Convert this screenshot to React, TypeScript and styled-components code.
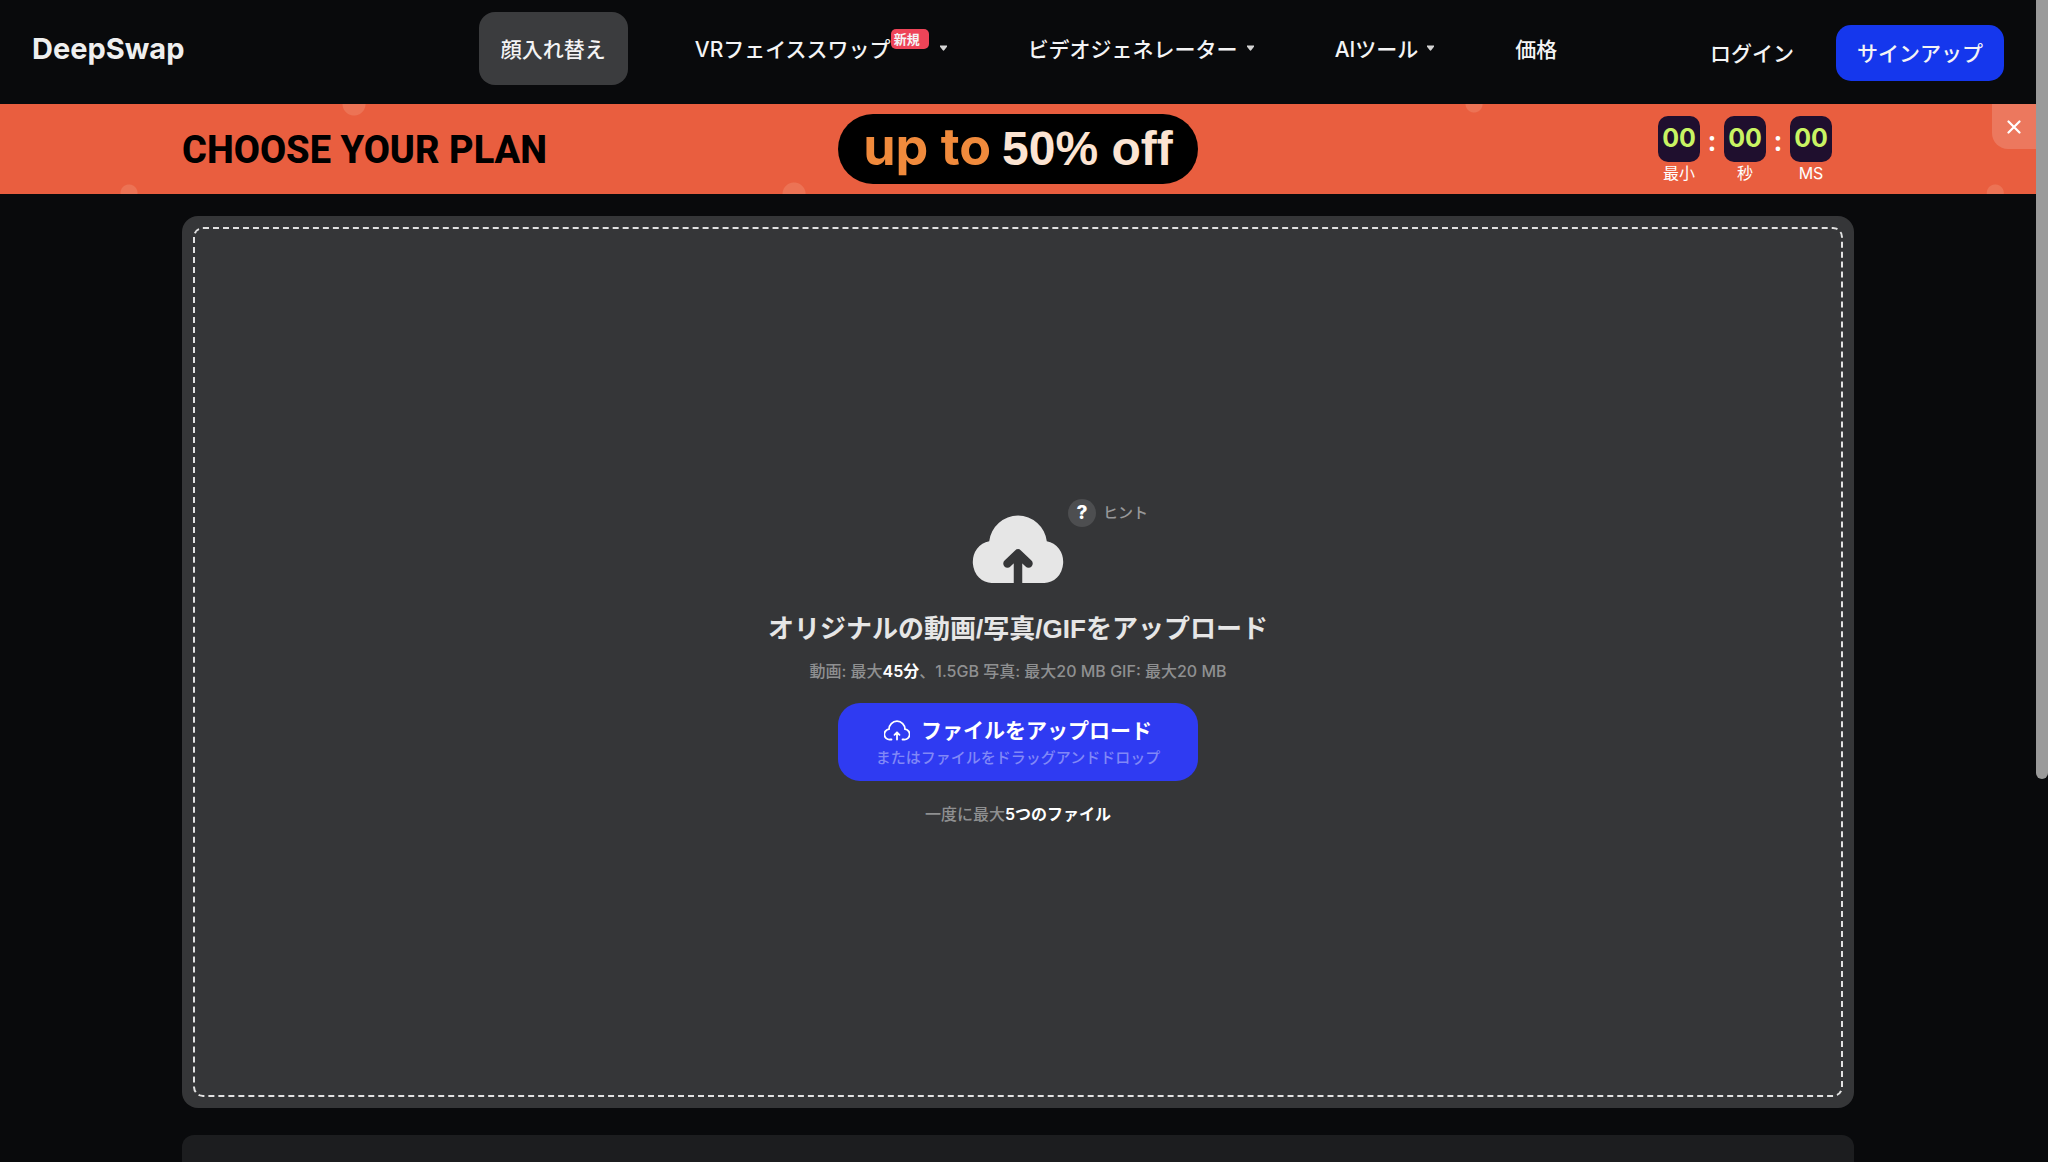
import React from "react";
import styled, { createGlobalStyle } from "styled-components";

const SANS = `Inter, "Noto Sans CJK JP", sans-serif`;

const GlobalStyle = createGlobalStyle`
  *, *::before, *::after { box-sizing: border-box; }
  body {
    margin: 0;
    background: #090a0c;
    color: #f4f4f5;
    font-family: ${SANS};
  }
  button { font: inherit; color: inherit; border: 0; padding: 0; background: none; cursor: pointer; }
  a { color: inherit; text-decoration: none; }
`;

const Page = styled.div`
  height: 100vh;
  overflow: hidden;
  padding-right: 12px;
`;

const Header = styled.header`
  display: grid;
  grid-template-columns: 1fr auto 1fr;
  align-items: start;
  height: 104px;
  padding: 12px 32px 0;
`;

const Logo = styled.a`
  justify-self: start;
  font-size: 29px;
  font-weight: 700;
  line-height: 74px;
  color: #efefef;
`;

const Nav = styled.nav`
  display: flex;
  gap: 45px;
  margin-left: 22px;
  font-size: 21px;
  font-weight: 500;
  white-space: nowrap;
`;

const NavLink = styled.a<{ $active?: boolean }>`
  display: flex;
  align-items: center;
  height: 73px;
  padding: 0 22px 2px;
  border-radius: 16px;
  background: ${(p) => (p.$active ? "#3b3c3e" : "transparent")};
`;

const NavButton = styled.button`
  display: flex;
  align-items: center;
  height: 73px;
  padding: 0 14px 2px 22px;
`;

const Badge = styled.span`
  align-self: flex-start;
  margin: 17px 2px 0 0;
  width: 38px;
  height: 20px;
  padding-left: 3px;
  border-radius: 5px;
  background: #ee4458;
  font-size: 13px;
  line-height: 20px;
  font-weight: 600;
  text-align: left;
`;

const Caret = styled.svg`
  width: 7px;
  height: 6px;
  margin-left: 9px;
`;

const Account = styled.div`
  justify-self: end;
  display: flex;
  align-items: center;
  gap: 42px;
  padding-top: 13px;
  font-size: 21px;
  font-weight: 500;
  white-space: nowrap;
`;

const LogIn = styled.a`
  padding-bottom: 2px;
`;

const SignUp = styled.button`
  height: 56px;
  padding: 0 21px 2px;
  border-radius: 15px;
  background: #1537ed;
`;

const Banner = styled.section`
  position: relative;
  display: grid;
  grid-template-columns: 1fr auto 1fr;
  align-items: center;
  height: 90px;
  padding: 0 204px 0 182px;
  background:
    radial-gradient(circle at 354px 0, #ec7355 11px, transparent 12px),
    radial-gradient(circle at 72.4% 0, #ec7355 8px, transparent 9px),
    radial-gradient(circle at 129px 89px, #ec7355 8px, transparent 9px),
    radial-gradient(circle at 39% 90px, #ec7355 11px, transparent 12px),
    radial-gradient(circle at 98% 89px, #ec7355 8px, transparent 9px),
    #e95e3f;
`;

const Plan = styled.h2`
  margin: 0;
  padding-top: 2px;
  font-family: Roboto, sans-serif;
  font-size: 38px;
  font-weight: 800;
  line-height: 88px;
  white-space: nowrap;
  color: #000;
`;

const Offer = styled.p`
  display: flex;
  align-items: baseline;
  justify-content: center;
  gap: 11px;
  width: 360px;
  height: 70px;
  margin: 0 0 0 22px;
  border-radius: 35px;
  background: #000;
  color: #fce4d2;
  font: 700 48px/66px "Liberation Sans", Arial, sans-serif;
  white-space: nowrap;
`;

const OfferLead = styled.span`
  font-family: Inter, sans-serif;
  font-size: 52px;
  color: #f08a3c;
`;

const Timer = styled.div`
  justify-self: end;
  display: flex;
  gap: 8px;
  padding-top: 2px;
`;

const TimerUnit = styled.div`
  display: flex;
  flex-direction: column;
  align-items: center;
  width: 42px;
  font-size: 16px;
  line-height: 22px;
  color: #fff;
`;

const TimerValue = styled.span`
  width: 42px;
  height: 46px;
  border-radius: 10px;
  background: #1f0f2e;
  color: #c9f463;
  font: 700 25px/44px Inter, sans-serif;
  text-align: center;
`;

const Colon = styled.span`
  width: 8px;
  color: #fff;
  font: 700 26px/50px "Open Sans", sans-serif;
  text-align: center;
`;

const Close = styled.button`
  position: absolute;
  top: 0;
  right: 0;
  display: grid;
  place-items: center;
  width: 44px;
  height: 45px;
  border-radius: 0 0 0 16px;
  background: #ec785e;
`;

const Content = styled.main`
  display: flex;
  flex-direction: column;
  gap: 27px;
  padding: 22px 182px 0;
`;

const UploadCard = styled.section`
  display: flex;
  height: calc(100vh - 270px);
  padding: 11px;
  border-radius: 16px;
  background: #353638;
`;

const DropZone = styled.div`
  flex: 1;
  display: flex;
  flex-direction: column;
  align-items: center;
  justify-content: center;
  border: 2px dashed #e2e2e2;
  border-radius: 10px;
`;

const CloudArea = styled.div`
  position: relative;
  padding-top: 16px;
  height: 84px;
`;

const Hint = styled.button`
  position: absolute;
  left: 100%;
  top: 0;
  display: flex;
  align-items: center;
  gap: 7px;
  margin-left: 4px;
  color: #98989a;
  font-size: 15px;
  font-weight: 500;
  line-height: 28px;
  white-space: nowrap;
`;

const HintMark = styled.span`
  width: 28px;
  height: 28px;
  border-radius: 50%;
  background: #4d4e50;
  color: #fff;
  font-size: 19px;
  font-weight: 800;
`;

const Title = styled.h1`
  margin: 28px 0 0;
  font-family: "Liberation Sans", "Noto Sans CJK JP", sans-serif;
  font-size: 26px;
  font-weight: 700;
  line-height: 36px;
  color: #e6e6e6;
`;

const Note = styled.p<{ $top: number }>`
  margin: ${(p) => p.$top}px 0 0;
  font-size: 16px;
  font-weight: 500;
  line-height: 24px;
  color: #8f9091;

  strong {
    color: #fff;
    font-weight: 600;
  }
`;

const UploadButton = styled.button`
  display: flex;
  flex-direction: column;
  align-items: center;
  justify-content: center;
  width: 360px;
  height: 78px;
  margin-top: 20px;
  padding-top: 2px;
  border-radius: 22px;
  background: #2f3bf2;
`;

const UploadLabel = styled.span`
  display: flex;
  align-items: center;
  gap: 11px;
  font-size: 21px;
  font-weight: 600;
  line-height: 30px;
  color: #fff;
`;

const UploadHint = styled.span`
  font-size: 15px;
  font-weight: 500;
  line-height: 24px;
  color: #8188f7;
`;

const NextCard = styled.section`
  height: 400px;
  border-radius: 12px;
  background: #1c1d1f;
`;

const ScrollRail = styled.div`
  position: fixed;
  top: 0;
  right: 0;
  bottom: 0;
  width: 12px;
`;

const ScrollThumb = styled.div`
  height: 67%;
  border-radius: 0 0 6px 6px;
  background: #9a9a9a;
`;

const DownCaret = () => (
  <Caret viewBox="0 0 8 6" aria-hidden="true">
    <path d="M1 0h6a1 1 0 0 1 1 1.6L5 5.4a1.3 1.3 0 0 1-2 0L0 1.6A1 1 0 0 1 1 0z" fill="#d4d4d4" />
  </Caret>
);

const CloudIcon = () => (
  <svg width="92" height="68" viewBox="0 0 92 68" aria-hidden="true">
    <path
      d="M20 68A19 21 0 0 1 17.200 26.200A29 29 0 0 1 74.800 26.200A19 21 0 0 1 72 68z"
      fill="#e6e6e6"
    />
    <path
      d="M46 74V40M35.500 48.500L46 38.500L56.500 48.500"
      fill="none"
      stroke="#353638"
      strokeWidth="8.500"
      strokeLinecap="round"
      strokeLinejoin="round"
    />
  </svg>
);

const CloudOutlineIcon = () => (
  <svg width="26" height="21" viewBox="0 0 26 21" fill="none" stroke="#fff" strokeWidth="1.800" strokeLinecap="round" strokeLinejoin="round" aria-hidden="true">
    <path d="M7.500 19.500H6A5 5 0 0 1 5 9.200A8 8 0 0 1 21 9.200A5 5 0 0 1 20 19.500H18.500" />
    <path d="M13 19.500V12.500M10.500 14.800L13 12.300L15.500 14.800" />
  </svg>
);

const units = ["最小", "秒", "MS"];

export default function App() {
  return (
    <>
      <GlobalStyle />
      <Page>
        <Header>
          <Logo href="#">DeepSwap</Logo>
          <Nav>
            <NavLink href="#" $active>顔入れ替え</NavLink>
            <NavButton>
              VRフェイススワップ
              <Badge>新規</Badge>
              <DownCaret />
            </NavButton>
            <NavButton>
              ビデオジェネレーター
              <DownCaret />
            </NavButton>
            <NavButton>
              AIツール
              <DownCaret />
            </NavButton>
            <NavLink href="#">価格</NavLink>
          </Nav>
          <Account>
            <LogIn href="#">ログイン</LogIn>
            <SignUp>サインアップ</SignUp>
          </Account>
        </Header>

        <Banner>
          <Plan>CHOOSE YOUR PLAN</Plan>
          <Offer>
            <OfferLead>up to</OfferLead>
            <span>50% off</span>
          </Offer>
          <Timer>
            {units.map((unit, i) => (
              <React.Fragment key={unit}>
                {i > 0 && <Colon>:</Colon>}
                <TimerUnit>
                  <TimerValue>00</TimerValue>
                  {unit}
                </TimerUnit>
              </React.Fragment>
            ))}
          </Timer>
          <Close aria-label="閉じる">
            <svg width="14" height="14" viewBox="0 0 14 14" stroke="#fff" strokeWidth="2.200" strokeLinecap="round" aria-hidden="true">
              <path d="M1.500 1.500l11 11M12.500 1.500l-11 11" />
            </svg>
          </Close>
        </Banner>

        <Content>
          <UploadCard>
            <DropZone>
              <CloudArea>
                <CloudIcon />
                <Hint>
                  <HintMark>?</HintMark>
                  ヒント
                </Hint>
              </CloudArea>
              <Title>オリジナルの動画/写真/GIFをアップロード</Title>
              <Note $top={12}>
                動画: 最大<strong>45分</strong>、1.5GB 写真: 最大20 MB GIF: 最大20 MB
              </Note>
              <UploadButton>
                <UploadLabel>
                  <CloudOutlineIcon />
                  ファイルをアップロード
                </UploadLabel>
                <UploadHint>またはファイルをドラッグアンドドロップ</UploadHint>
              </UploadButton>
              <Note $top={21}>
                一度に最大<strong>5つのファイル</strong>
              </Note>
            </DropZone>
          </UploadCard>
          <NextCard />
        </Content>
      </Page>
      <ScrollRail>
        <ScrollThumb />
      </ScrollRail>
    </>
  );
}
